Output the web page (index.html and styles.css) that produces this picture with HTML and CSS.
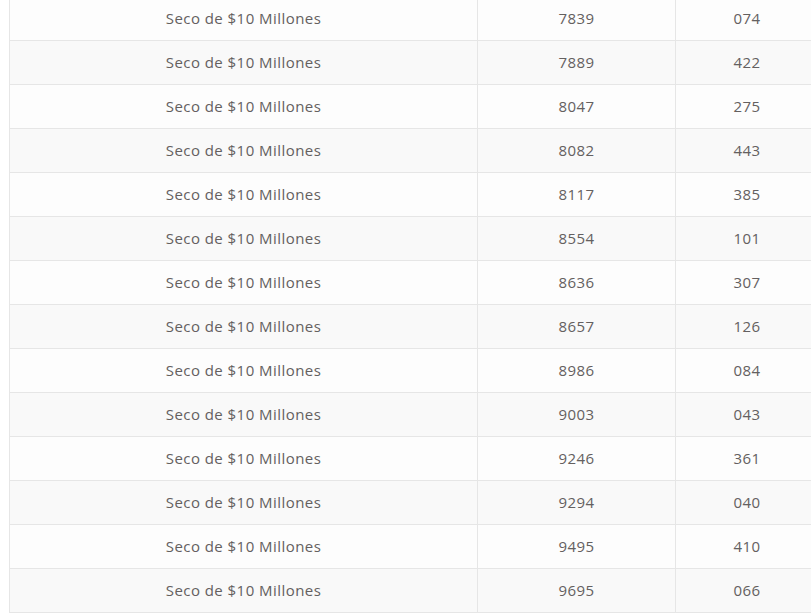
FILE: index.html
```html
<!DOCTYPE html>
<html>
<head>
  <title>Resultados</title>
  <link rel="stylesheet" href="styles.css">
</head>
<body>
  <div class="results">
    <table class="results-table">
      <tbody>
        <tr><td>Seco de $10 Millones</td><td>7839</td><td>074</td></tr>
        <tr><td>Seco de $10 Millones</td><td>7889</td><td>422</td></tr>
        <tr><td>Seco de $10 Millones</td><td>8047</td><td>275</td></tr>
        <tr><td>Seco de $10 Millones</td><td>8082</td><td>443</td></tr>
        <tr><td>Seco de $10 Millones</td><td>8117</td><td>385</td></tr>
        <tr><td>Seco de $10 Millones</td><td>8554</td><td>101</td></tr>
        <tr><td>Seco de $10 Millones</td><td>8636</td><td>307</td></tr>
        <tr><td>Seco de $10 Millones</td><td>8657</td><td>126</td></tr>
        <tr><td>Seco de $10 Millones</td><td>8986</td><td>084</td></tr>
        <tr><td>Seco de $10 Millones</td><td>9003</td><td>043</td></tr>
        <tr><td>Seco de $10 Millones</td><td>9246</td><td>361</td></tr>
        <tr><td>Seco de $10 Millones</td><td>9294</td><td>040</td></tr>
        <tr><td>Seco de $10 Millones</td><td>9495</td><td>410</td></tr>
        <tr><td>Seco de $10 Millones</td><td>9695</td><td>066</td></tr>
      </tbody>
    </table>
  </div>
</body>
</html>
```

FILE: styles.css
```css
html, body {
  margin: 0;
  overflow: hidden;
  background: #fff;
}

body {
  padding-left: 9px;
  font-family: "Open Sans", "Noto Sans", sans-serif;
}

.results {
  margin-top: -4px;
  width: 810px;
}

.results-table {
  border-collapse: collapse;
  width: 100%;
  table-layout: fixed;
}

.results-table td {
  height: 41px;
  padding: 0 0 2px;
  border: 1px solid #e6e6e6;
  text-align: center;
  vertical-align: middle;
  font-size: 15px;
  color: #646060;
  letter-spacing: 0.45px;
}

.results-table td:nth-child(1) {
  width: 467px;
}

.results-table td:nth-child(2) {
  width: 197px;
}

.results-table tr:nth-child(even) td {
  background: #f9f9f9;
}

.results-table tr:nth-child(odd) td {
  background: #fdfdfd;
}
```
